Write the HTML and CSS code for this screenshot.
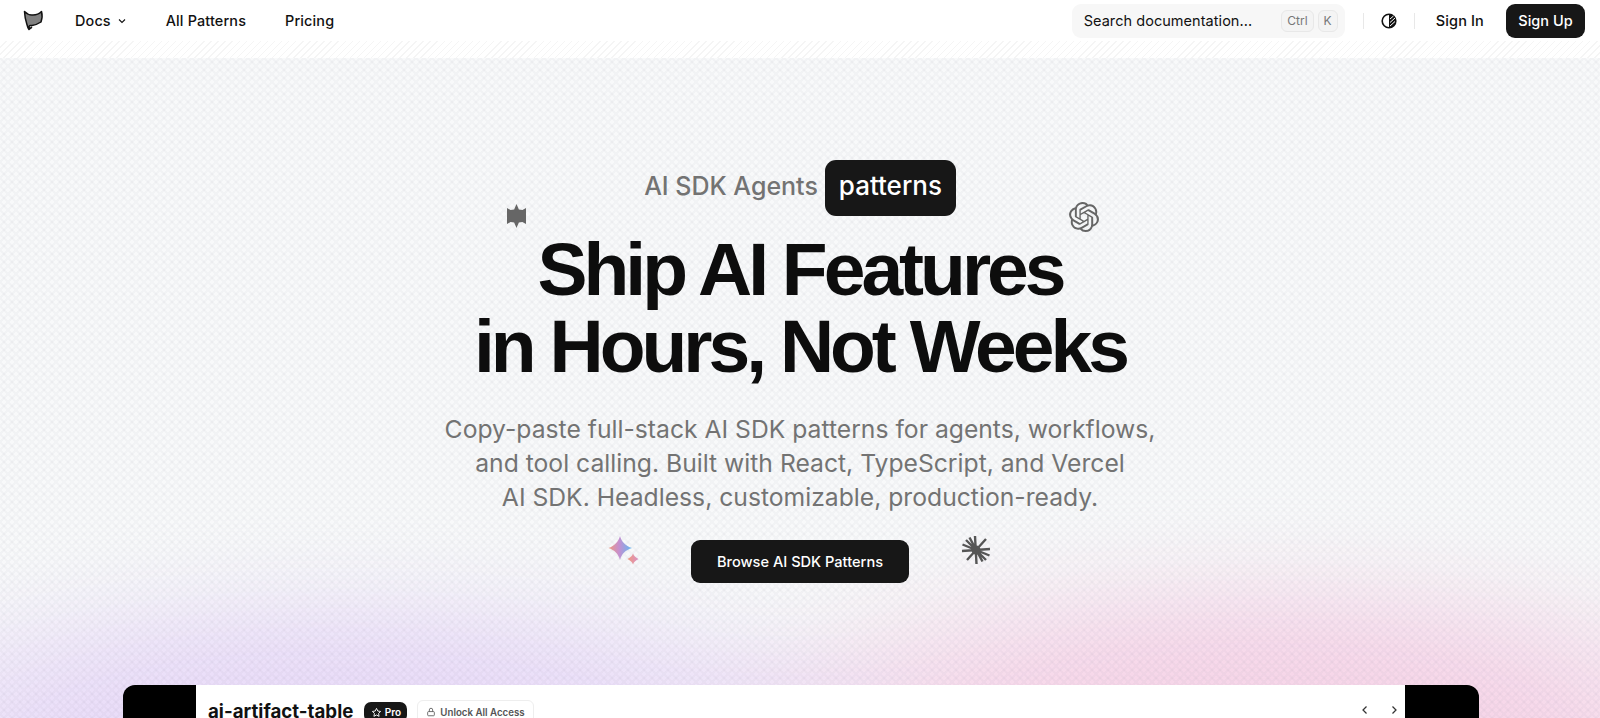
FILE: index.html
```html
<!DOCTYPE html>
<html lang="en">
<head>
<meta charset="utf-8">
<title>AI SDK Agents patterns</title>
<link rel="stylesheet" href="styles.css">
</head>
<body>
<header class="topbar">
  <div class="nav-left">
    <svg class="logo" viewBox="0 0 22 22" width="22" height="22"><path d="M2.500 2.500C5 5 8 6.500 11 6c3 0 6-1 8.500-3.500 1 3.500.5 7.500-.5 10.500-3 2-6.500 3-9 3.500H8.500c-1.500 0-2 1.700-1 2.300.7.400 1.500.2 2-.4L7 20.500C5.800 19 5.300 17 4.800 15 3.500 11 2.700 6.500 2.500 2.500z" fill="#808080" stroke="#111" stroke-width="1.500" stroke-linejoin="round"/></svg>
    <nav class="nav-links">
      <a class="nav-link docs">Docs <svg viewBox="0 0 24 24" width="12" height="12"><path d="m6 9 6 6 6-6" fill="none" stroke="#111" stroke-width="2.200"/></svg></a>
      <a class="nav-link">All Patterns</a>
      <a class="nav-link">Pricing</a>
    </nav>
  </div>
  <div class="nav-right">
    <div class="search">
      <span class="search-text">Search documentation...</span>
      <span class="keys"><kbd>Ctrl</kbd><kbd>K</kbd></span>
    </div>
    <span class="divider"></span>
    <svg class="theme" viewBox="0 0 16 16" width="16" height="16"><circle cx="8" cy="8" r="6.800" fill="#fff" stroke="#111" stroke-width="1.600"/><path d="M8 1.200a6.800 6.800 0 0 1 0 13.600z" fill="#111"/><path d="m9 6 3.500-3M9 9.500l5-4.500M9 13l5-4.500" stroke="#fff" stroke-width="1"/></svg>
    <span class="divider"></span>
    <a class="sign-in">Sign In</a>
    <a class="sign-up">Sign Up</a>
  </div>
</header>
<div class="stripes"></div>
<main class="hero">
  <div class="hero-glow"></div>
  <div class="hero-pattern"></div>
  <div class="hero-body">
    <div class="eyebrow"><span>AI SDK Agents</span><b class="pill">patterns</b></div>
    <h1>Ship AI Features<br>in Hours, Not Weeks</h1>
    <p class="lead">Copy-paste full-stack AI SDK patterns for agents, workflows,<br>and tool calling. Built with React, TypeScript, and Vercel<br>AI SDK. Headless, customizable, production-ready.</p>
    <a class="cta">Browse AI SDK Patterns</a>
    <svg class="float f-burst" viewBox="0 0 16 24" width="19" height="24" preserveAspectRatio="none"><path d="M0 4 3 6 6 5.500 8 0 10 5.500 13 6 16 4V20L13 18 10 18.500 8 24 6 18.500 3 18 0 20z" fill="#666"/></svg>
    <svg class="float f-openai" viewBox="0 0 24 24" width="30" height="30"><path fill="#666" d="M22.2819 9.8211a5.9847 5.9847 0 0 0-.5157-4.9108 6.0462 6.0462 0 0 0-6.5098-2.9A6.0651 6.0651 0 0 0 4.9807 4.1818a5.9847 5.9847 0 0 0-3.9977 2.9 6.0462 6.0462 0 0 0 .7427 7.0966 5.98 5.98 0 0 0 .511 4.9107 6.051 6.051 0 0 0 6.5146 2.9001A5.9847 5.9847 0 0 0 13.2599 24a6.0557 6.0557 0 0 0 5.7718-4.2058 5.9894 5.9894 0 0 0 3.9977-2.9001 6.0557 6.0557 0 0 0-.7475-7.0729zm-9.022 12.6081a4.4755 4.4755 0 0 1-2.8764-1.0408l.1419-.0804 4.7783-2.7582a.7948.7948 0 0 0 .3927-.6813v-6.7369l2.02 1.1686a.071.071 0 0 1 .038.052v5.5826a4.504 4.504 0 0 1-4.4945 4.4944zm-9.6607-4.1254a4.4708 4.4708 0 0 1-.5346-3.0137l.142.0852 4.783 2.7582a.7712.7712 0 0 0 .7806 0l5.8428-3.3685v2.3324a.0804.0804 0 0 1-.0332.0615L9.74 19.9502a4.4992 4.4992 0 0 1-6.1408-1.6464zM2.3408 7.8956a4.485 4.485 0 0 1 2.3655-1.9728V11.6a.7664.7664 0 0 0 .3879.6765l5.8144 3.3543-2.0201 1.1685a.0757.0757 0 0 1-.071 0l-4.8303-2.7865A4.504 4.504 0 0 1 2.3408 7.872zm16.5963 3.8558L13.1038 8.364 15.1192 7.2a.0757.0757 0 0 1 .071 0l4.8303 2.7913a4.4944 4.4944 0 0 1-.6765 8.1042v-5.6772a.79.79 0 0 0-.407-.667zm2.0107-3.0231l-.142-.0852-4.7735-2.7818a.7759.7759 0 0 0-.7854 0L9.409 9.2297V6.8974a.0662.0662 0 0 1 .0284-.0615l4.8303-2.7866a4.4992 4.4992 0 0 1 6.6802 4.66zM8.3065 12.863l-2.02-1.1638a.0804.0804 0 0 1-.038-.0567V6.0742a4.4992 4.4992 0 0 1 7.3757-3.4537l-.142.0805L8.704 5.459a.7948.7948 0 0 0-.3927.6813zm1.0976-2.3654l2.602-1.4998 2.6069 1.4998v2.9994l-2.5974 1.4997-2.6067-1.4997Z"/></svg>
    <svg class="float f-spark" viewBox="0 0 32 32" width="32" height="32"><defs><linearGradient id="sg" x1="0" y1=".5" x2="1" y2=".5"><stop offset="0" stop-color="#f09a7e"/><stop offset=".45" stop-color="#c58fd0"/><stop offset="1" stop-color="#62b9f2"/></linearGradient><linearGradient id="sg2" x1="0" y1=".5" x2="1" y2=".5"><stop offset="0" stop-color="#f09a7e"/><stop offset="1" stop-color="#d991c6"/></linearGradient></defs><path d="M12 1c1.500 5.500 5.500 10 12 12-6.500 2-10.500 6-12 12C10.500 19 6.500 15 .500 13 6.500 11 10.500 6.500 12 1z" fill="url(#sg)"/><path d="M25 18.500c.8 2.400 2.400 4 5.500 5.500-3.100 1.500-4.700 3.100-5.500 5.500-.8-2.400-2.400-4-5.500-5.500 3.100-1.500 4.700-3.100 5.500-5.500z" fill="url(#sg2)"/></svg>
    <svg class="float f-star" viewBox="0 0 30 30" width="30" height="30"><circle cx="15" cy="15" r="4.500" fill="#555"/><g stroke="#555" stroke-width="2.400" stroke-linecap="butt"><path d="M14 1l1.500 28M1 16l28-2M5 5l20 20M25 4 6 25M8.500 2.500l13 24M1.500 9.500l27 11"/></g></svg>
    <section class="demo">
      <div class="demo-inner">
        <div class="demo-title">
          <span class="demo-name">ai-artifact-table</span>
          <span class="badge"><svg viewBox="0 0 24 24" width="11" height="11"><path d="m12 3 2.800 5.800 6.200.900-4.500 4.400 1.100 6.300L12 17.400l-5.600 3 1.100-6.300L3 9.700l6.200-.900z" fill="none" stroke="#fff" stroke-width="2"/></svg>Pro</span>
          <span class="unlock"><svg viewBox="0 0 24 24" width="10" height="10"><rect x="4" y="11" width="16" height="10" rx="2" fill="none" stroke="#555" stroke-width="2"/><path d="M8 11V7a4 4 0 0 1 8 0v4" fill="none" stroke="#555" stroke-width="2"/></svg>Unlock All Access</span>
        </div>
        <div class="pager">
          <svg viewBox="0 0 24 24" width="12" height="12"><path d="m15 5-7 7 7 7" fill="none" stroke="#333" stroke-width="2.500"/></svg>
          <svg viewBox="0 0 24 24" width="12" height="12"><path d="m9 5 7 7-7 7" fill="none" stroke="#333" stroke-width="2.500"/></svg>
        </div>
      </div>
    </section>
  </div>
</main>
</body>
</html>
```
FILE: styles.css
```css
* { box-sizing: border-box; }
html, body { margin: 0; height: 718px; overflow: hidden; }
body { background: #fff; color: #111; font-family: Inter, "Liberation Sans", sans-serif; }

.topbar { height: 41px; padding: 0 15px 0 22px; display: flex; align-items: center; justify-content: space-between; background: #fff; }
.nav-left { display: flex; align-items: center; }
.logo { display: block; margin-top: -1px; }
.nav-links { display: flex; align-items: center; gap: 39px; margin-left: 31px; }
.nav-link { display: flex; align-items: center; gap: 5px; font-size: 14.400px; letter-spacing: .15px; font-weight: 450; color: #111; }
.docs { margin-right: -1px; }
.nav-right { display: flex; align-items: center; }
.search { width: 273px; height: 34px; padding: 0 7px 0 12px; margin-right: 18px; border-radius: 9px; background: #f7f7f7; display: flex; align-items: center; justify-content: space-between; }
.search-text { font-size: 14.500px; letter-spacing: .05px; color: #111; }
.keys { display: flex; gap: 4px; }
kbd { height: 22px; padding: 0 5px; border: 1px solid #e8e8e8; border-radius: 6px; background: #f4f4f4; color: #777; font: 12px Inter, sans-serif; display: flex; align-items: center; }
.divider { width: 1px; height: 16px; background: #e8e8e8; }
.theme { margin: 0 17px; }
.sign-in { margin-left: 21px; font-size: 14.500px; letter-spacing: .15px; font-weight: 450; }
.sign-up { margin-left: 22px; width: 79px; height: 34px; border-radius: 9px; background: #171717; color: #fff; font-size: 14.500px; font-weight: 500; display: flex; align-items: center; justify-content: center; }

.stripes { height: 17px; background: repeating-linear-gradient(135deg, #fff 0 4px, #f5f5f5 4px 5px); }

.hero { position: relative; height: 660px; background: #f8f9fa; overflow: hidden; }
.hero-glow { position: absolute; inset: 0 -80px -80px; filter: blur(28px); background:
  radial-gradient(ellipse 640px 190px at 420px 690px, #e9dcf8 0%, #e9dcf8 45%, rgba(233,220,248,.55) 72%, rgba(233,220,248,0) 100%),
  radial-gradient(ellipse 640px 220px at 1340px 700px, #f6d5e8 0%, #f6d5e8 45%, rgba(246,213,232,.55) 72%, rgba(246,213,232,0) 100%),
  radial-gradient(ellipse 400px 110px at 880px 690px, #f0e3f3 0%, rgba(240,227,243,0) 100%); }
.hero-pattern { position: absolute; inset: 0; background-size: 8px 8px; background-image:
  linear-gradient(45deg, transparent 42%, rgba(90,100,120,.04) 42% 58%, transparent 58%),
  linear-gradient(-45deg, transparent 42%, rgba(90,100,120,.04) 42% 58%, transparent 58%); }
.hero-body { position: relative; height: 100%; padding-top: 102px; display: flex; flex-direction: column; align-items: center; }

.eyebrow { display: flex; align-items: center; gap: 7px; font-size: 25px; color: #737373; font-weight: 450; }
.eyebrow span { padding-bottom: 5px; }
.pill { height: 56px; padding: 0 0 5px; width: 131px; border-radius: 11px; background: #171717; color: #fff; font-size: 26px; font-weight: 500; display: flex; align-items: center; justify-content: center; }
h1 { margin: 15px 0 0; font-size: 75px; line-height: 77px; font-weight: 700; letter-spacing: -4px; text-align: center; color: #0d0d0d; font-family: "Liberation Sans", sans-serif; }
.lead { margin: 27px 0 0; font-size: 24.700px; line-height: 34px; text-align: center; color: #737373; }
.cta { margin-top: 26px; width: 218px; height: 43px; border-radius: 9px; background: #171717; color: #fff; font-size: 14.600px; font-weight: 500; display: flex; align-items: center; justify-content: center; }

.float { position: absolute; display: block; }
.f-burst { left: 507px; top: 146px; }
.f-openai { left: 1069px; top: 144px; }
.f-spark { left: 608px; top: 477px; }
.f-star { left: 961px; top: 477px; }

.demo { position: absolute; left: 123px; right: 121px; top: 627px; height: 120px; border-radius: 12px 12px 0 0; background: #000; padding: 0 74px 0 73px; }
.demo-inner { height: 100%; background: #fff; padding: 15px 0 0 12px; display: flex; justify-content: space-between; align-items: flex-start; }
.demo-title { display: flex; align-items: center; }
.demo-name { font-size: 18.700px; font-weight: 700; line-height: 22px; margin-right: 11px; }
.badge { height: 20px; width: 43px; border-radius: 7px; background: #171717; color: #fff; font-size: 10px; font-weight: 600; display: flex; align-items: center; justify-content: center; gap: 3px; margin-right: 10px; }
.unlock { height: 24px; padding: 0 8px; border: 1px solid #eee; border-radius: 6px; color: #555; font-size: 9.700px; font-weight: 600; display: flex; align-items: center; gap: 4px; }
.pager { display: flex; gap: 17px; margin: 4px 5px 0 0; }
.pager svg { display: block; }
```
